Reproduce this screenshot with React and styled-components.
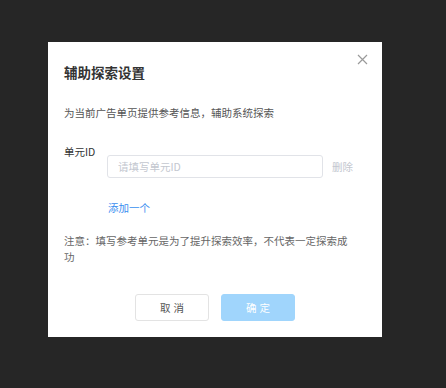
import React from "react";
import styled, { createGlobalStyle } from "styled-components";

const GlobalStyle = createGlobalStyle`
  html, body {
    margin: 0;
    padding: 0;
    background: #262626;
  }
  body {
    font-family: "Noto Sans CJK SC", "Noto Sans", sans-serif;
  }
`;

const Page = styled.div`
  width: 446px;
  height: 388px;
  box-sizing: border-box;
  padding: 42px 0 0 48px;
  background: #262626;
`;

const Modal = styled.div`
  position: relative;
  width: 334px;
  height: 295px;
  box-sizing: border-box;
  padding: 20px 16px 0;
  background: #fff;
  display: flex;
  flex-direction: column;
`;

const Title = styled.h2`
  margin: 0;
  font-size: 13.5px;
  line-height: 20px;
  font-weight: 700;
  color: #333;
`;

const Close = styled.button`
  position: absolute;
  top: 11px;
  right: 13px;
  width: 13px;
  height: 13px;
  padding: 0;
  border: none;
  background: transparent;
  cursor: pointer;
  display: flex;
  align-items: center;
  justify-content: center;
`;

const Desc = styled.p`
  margin: 23px 0 0;
  font-size: 10.5px;
  line-height: 16px;
  color: #555;
`;

const Row = styled.div`
  display: flex;
  margin-top: 23px;
`;

const Label = styled.div`
  width: 43px;
  flex: none;
  font-size: 10.5px;
  line-height: 16px;
  color: #333;
`;

const Field = styled.div`
  display: flex;
  align-items: center;
  gap: 9px;
  margin-top: 11px;
`;

const Input = styled.input`
  width: 216px;
  height: 23px;
  box-sizing: border-box;
  padding: 0 10px;
  border: 1px solid #e1e3e8;
  border-radius: 3px;
  font-family: inherit;
  font-size: 10.5px;
  color: #333;
  outline: none;
  &::placeholder {
    color: #c3c7cf;
  }
`;

const TextButton = styled.button`
  display: block;
  padding: 0;
  border: none;
  background: transparent;
  font-family: inherit;
  font-size: 10.5px;
  line-height: 16px;
  color: ${(p) => p.$color};
  cursor: pointer;
`;

const AddWrap = styled.div`
  display: flex;
  margin: 22px 0 0 44px;
`;

const Note = styled.p`
  margin: 17px 0 0;
  width: 292px;
  font-size: 10.5px;
  line-height: 16px;
  color: #666;
`;

const Footer = styled.div`
  display: flex;
  justify-content: center;
  gap: 12px;
  margin-top: 29px;
`;

const Btn = styled.button`
  width: 74px;
  height: 27px;
  box-sizing: border-box;
  border-radius: 3px;
  border: 1px solid ${(p) => (p.$primary ? "#a0d5fc" : "#e3e3e3")};
  background: ${(p) => (p.$primary ? "#a0d5fc" : "#fff")};
  color: ${(p) => (p.$primary ? "#fff" : "#555")};
  font-family: inherit;
  font-size: 10.5px;
  letter-spacing: 3px;
  text-indent: 3px;
  cursor: pointer;
`;

export default function App() {
  return (
    <>
      <GlobalStyle />
      <Page>
        <Modal>
          <Title>辅助探索设置</Title>
          <Close aria-label="关闭">
            <svg width="11" height="11" viewBox="0 0 11 11">
              <path d="M1 1 L10 10 M10 1 L1 10" stroke="#9a9a9a" strokeWidth="1.2" />
            </svg>
          </Close>
          <Desc>为当前广告单页提供参考信息，辅助系统探索</Desc>
          <Row>
            <Label>单元ID</Label>
            <Field>
              <Input placeholder="请填写单元ID" />
              <TextButton $color="#c3c7cf">删除</TextButton>
            </Field>
          </Row>
          <AddWrap>
            <TextButton $color="#3a8ef0">添加一个</TextButton>
          </AddWrap>
          <Note>注意：填写参考单元是为了提升探索效率，不代表一定探索成功</Note>
          <Footer>
            <Btn>取消</Btn>
            <Btn $primary>确定</Btn>
          </Footer>
        </Modal>
      </Page>
    </>
  );
}
